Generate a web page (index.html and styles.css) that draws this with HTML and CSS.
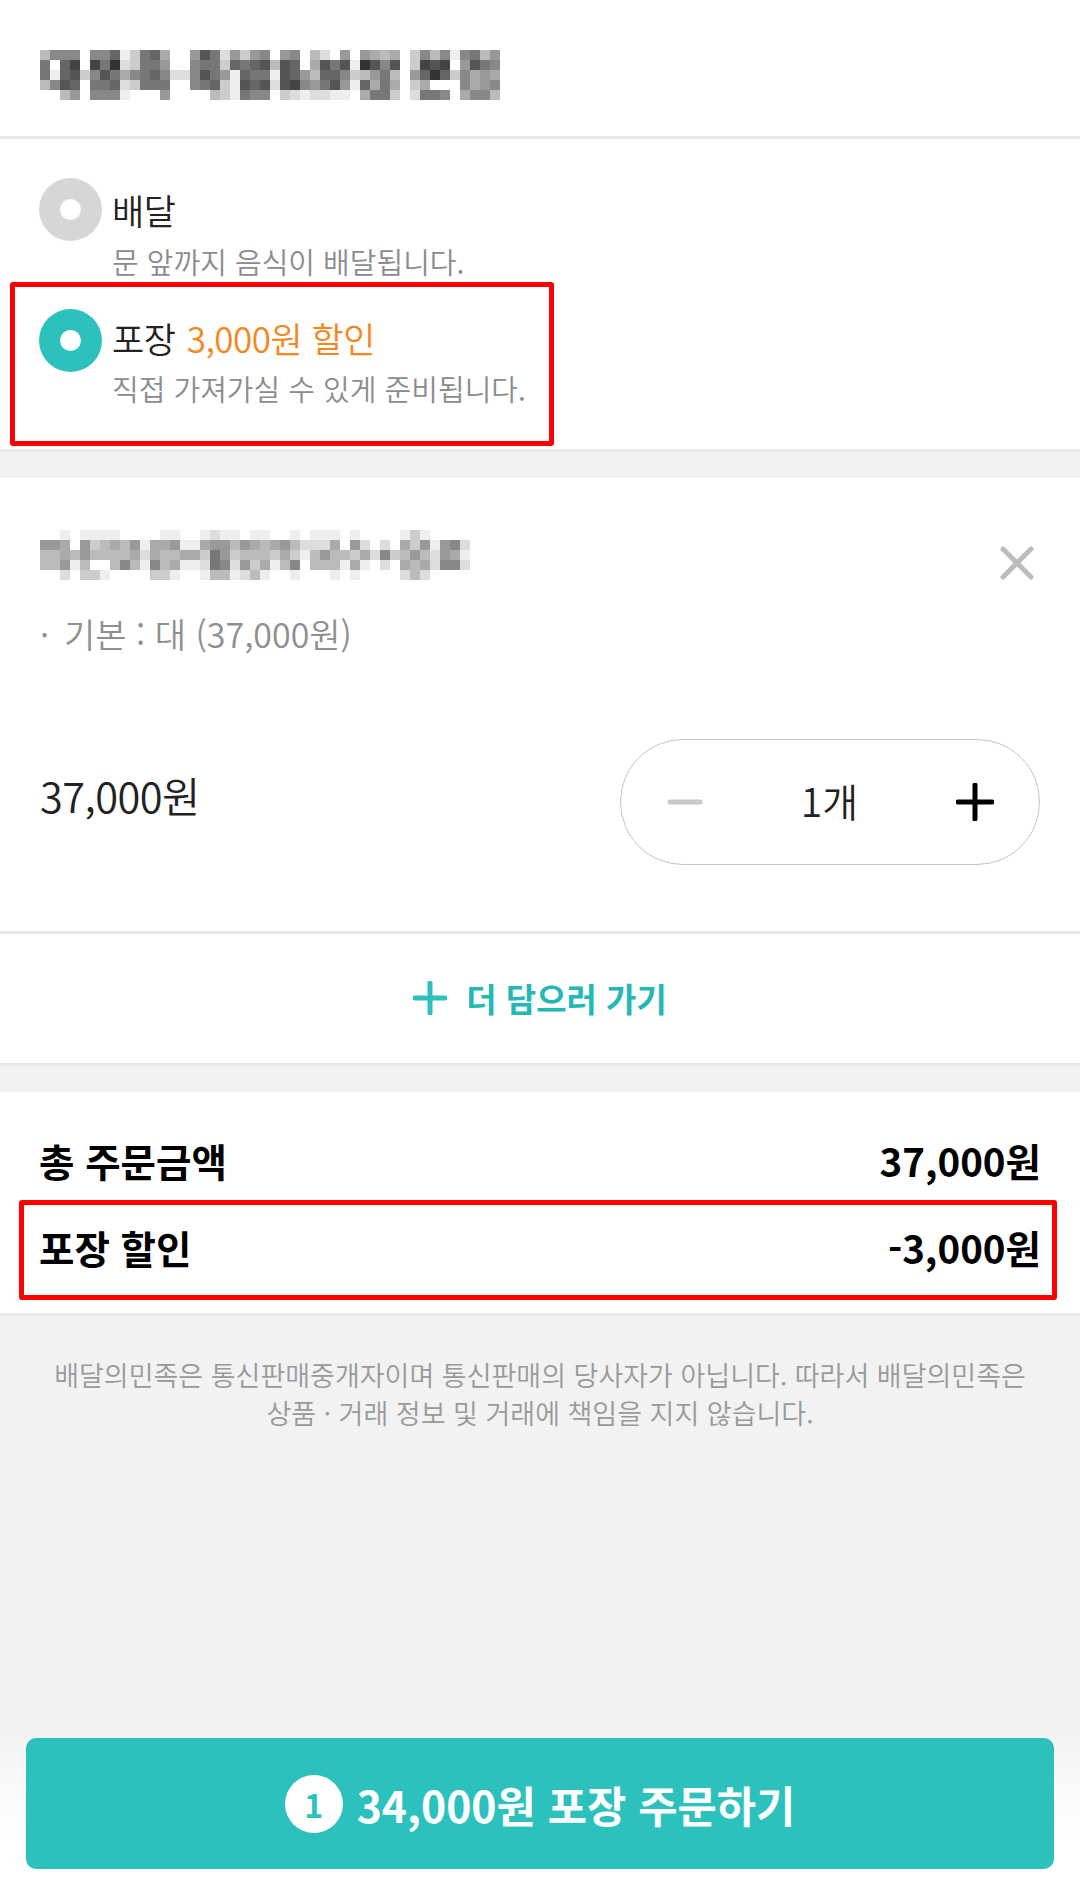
FILE: index.html
```html
<!DOCTYPE html>
<html lang="ko">
<head>
<meta charset="utf-8">
<title>카트</title>
<link rel="stylesheet" href="styles.css">
</head>
<body>
<main class="page">
  <header class="store">
    <svg class="mosaic store-name" viewBox="0 0 46 5" shape-rendering="crispEdges" aria-hidden="true">
      <g><rect x=0 fill=#bbb /><rect x=1 fill=#888 /><rect x=2 fill=#888 /><rect x=3 fill=#888 /><rect x=5 fill=#888 /><rect x=6 fill=#888 /><rect x=7 fill=#666 /><rect x=8 fill=#eee /><rect x=9 fill=#ccc /><rect x=10 fill=#777 /><rect x=11 fill=#666 /><rect x=12 fill=#aaa /><rect x=15 fill=#999 /><rect x=16 fill=#555 /><rect x=17 fill=#777 /><rect x=18 fill=#ddd /><rect x=19 fill=#999 /><rect x=20 fill=#ccc /><rect x=21 fill=#999 /><rect x=22 fill=#888 /><rect x=24 fill=#999 /><rect x=25 fill=#888 /><rect x=27 fill=#bbb /><rect x=28 fill=#ddd /><rect x=30 fill=#999 /><rect x=32 fill=#999 /><rect x=33 fill=#aaa /><rect x=34 fill=#bbb /><rect x=35 fill=#aaa /><rect x=37 fill=#ccc /><rect x=38 fill=#888 /><rect x=39 fill=#bbb /><rect x=40 fill=#888 /><rect x=41 fill=#eee /><rect x=42 fill=#888 /><rect x=43 fill=#777 /><rect x=44 fill=#bbb /><rect x=45 fill=#999 /></g>
      <g transform="translate(0 1)"><rect x=0 fill=#777 /><rect x=2 fill=#666 /><rect x=3 fill=#444 /><rect x=5 fill=#444 /><rect x=6 fill=#777 /><rect x=7 fill=#333 /><rect x=8 fill=#ddd /><rect x=9 fill=#ccc /><rect x=10 fill=#777 /><rect x=11 fill=#777 /><rect x=12 fill=#999 /><rect x=15 fill=#888 /><rect x=16 fill=#777 /><rect x=17 fill=#777 /><rect x=18 fill=#ccc /><rect x=19 fill=#666 /><rect x=20 fill=#777 /><rect x=21 fill=#666 /><rect x=22 fill=#555 /><rect x=23 fill=#bbb /><rect x=24 fill=#555 /><rect x=25 fill=#666 /><rect x=27 fill=#aaa /><rect x=28 fill=#555 /><rect x=29 fill=#777 /><rect x=30 fill=#555 /><rect x=31 fill=#eee /><rect x=32 fill=#333 /><rect x=33 fill=#555 /><rect x=34 fill=#888 /><rect x=35 fill=#555 /><rect x=37 fill=#ccc /><rect x=38 fill=#444 /><rect x=39 fill=#555 /><rect x=40 fill=#444 /><rect x=42 fill=#999 /><rect x=43 fill=#555 /><rect x=44 fill=#777 /><rect x=45 fill=#888 /></g>
      <g transform="translate(0 2)"><rect x=0 fill=#777 /><rect x=1 fill=#eee /><rect x=2 fill=#666 /><rect x=3 fill=#555 /><rect x=4 fill=#ccc /><rect x=5 fill=#888 /><rect x=6 fill=#555 /><rect x=7 fill=#777 /><rect x=8 fill=#aaa /><rect x=9 fill=#888 /><rect x=10 fill=#777 /><rect x=11 fill=#666 /><rect x=12 fill=#888 /><rect x=13 fill=#ddd /><rect x=14 fill=#ddd /><rect x=15 fill=#888 /><rect x=16 fill=#555 /><rect x=17 fill=#777 /><rect x=18 fill=#999 /><rect x=19 fill=#eee /><rect x=20 fill=#666 /><rect x=21 fill=#777 /><rect x=22 fill=#777 /><rect x=23 fill=#eee /><rect x=24 fill=#555 /><rect x=25 fill=#666 /><rect x=26 fill=#999 /><rect x=27 fill=#bbb /><rect x=28 fill=#666 /><rect x=29 fill=#666 /><rect x=30 fill=#888 /><rect x=31 fill=#ccc /><rect x=32 fill=#bbb /><rect x=33 fill=#999 /><rect x=34 fill=#777 /><rect x=35 fill=#bbb /><rect x=37 fill=#999 /><rect x=38 fill=#666 /><rect x=39 fill=#333 /><rect x=40 fill=#666 /><rect x=41 fill=#ccc /><rect x=42 fill=#888 /><rect x=43 fill=#aaa /><rect x=44 fill=#999 /><rect x=45 fill=#aaa /></g>
      <g transform="translate(0 3)"><rect x=0 fill=#bbb /><rect x=1 fill=#888 /><rect x=2 fill=#555 /><rect x=3 fill=#666 /><rect x=5 fill=#777 /><rect x=6 fill=#777 /><rect x=7 fill=#666 /><rect x=8 fill=#ddd /><rect x=9 fill=#ccc /><rect x=10 fill=#777 /><rect x=11 fill=#777 /><rect x=12 fill=#777 /><rect x=15 fill=#888 /><rect x=16 fill=#777 /><rect x=17 fill=#666 /><rect x=18 fill=#ccc /><rect x=19 fill=#eee /><rect x=20 fill=#555 /><rect x=21 fill=#666 /><rect x=22 fill=#555 /><rect x=23 fill=#ddd /><rect x=24 fill=#555 /><rect x=25 fill=#444 /><rect x=26 fill=#888 /><rect x=27 fill=#999 /><rect x=28 fill=#777 /><rect x=29 fill=#555 /><rect x=30 fill=#999 /><rect x=31 fill=#eee /><rect x=32 fill=#666 /><rect x=33 fill=#aaa /><rect x=34 fill=#777 /><rect x=35 fill=#aaa /><rect x=37 fill=#ccc /><rect x=38 fill=#aaa /><rect x=42 fill=#888 /><rect x=43 fill=#aaa /><rect x=44 fill=#999 /><rect x=45 fill=#888 /></g>
      <g transform="translate(0 4)"><rect x=2 fill=#bbb /><rect x=3 fill=#999 /><rect x=5 fill=#888 /><rect x=6 fill=#888 /><rect x=7 fill=#888 /><rect x=8 fill=#eee /><rect x=12 fill=#999 /><rect x=17 fill=#bbb /><rect x=18 fill=#ccc /><rect x=19 fill=#eee /><rect x=20 fill=#777 /><rect x=21 fill=#888 /><rect x=22 fill=#888 /><rect x=24 fill=#ccc /><rect x=25 fill=#ddd /><rect x=26 fill=#eee /><rect x=27 fill=#ddd /><rect x=28 fill=#ddd /><rect x=29 fill=#eee /><rect x=30 fill=#eee /><rect x=32 fill=#aaa /><rect x=33 fill=#777 /><rect x=34 fill=#777 /><rect x=35 fill=#ccc /><rect x=37 fill=#ddd /><rect x=38 fill=#777 /><rect x=39 fill=#777 /><rect x=40 fill=#888 /><rect x=42 fill=#aaa /><rect x=43 fill=#888 /><rect x=44 fill=#888 /><rect x=45 fill=#bbb /></g>
    </svg>
  </header>

  <section class="options">
    <div class="option">
      <span class="radio"></span>
      <div class="option-title">배달</div>
      <div class="option-desc">문 앞까지 음식이 배달됩니다.</div>
    </div>
    <div class="option option-picked">
      <span class="radio radio-on"></span>
      <div class="option-title">포장 <em class="discount">3,000원 할인</em></div>
      <div class="option-desc">직접 가져가실 수 있게 준비됩니다.</div>
      <span class="mark mark-option"></span>
    </div>
  </section>

  <section class="item">
    <div class="item-head">
      <svg class="mosaic item-name" viewBox="0 0 43 5" shape-rendering="crispEdges" aria-hidden="true">
        <g><rect x=2 fill=#eee /><rect x=4 fill=#eee /><rect x=5 fill=#eee /><rect x=6 fill=#eee /><rect x=7 fill=#eee /><rect x=12 fill=#eee /><rect x=13 fill=#eee /><rect x=16 fill=#eee /><rect x=17 fill=#ddd /><rect x=18 fill=#eee /><rect x=19 fill=#eee /><rect x=21 fill=#eee /><rect x=22 fill=#eee /><rect x=25 fill=#eee /><rect x=27 fill=#eee /><rect x=28 fill=#eee /><rect x=29 fill=#eee /><rect x=31 fill=#eee /><rect x=36 fill=#eee /><rect x=37 fill=#ccc /><rect x=38 fill=#eee /></g>
        <g transform="translate(0 1)"><rect x=0 fill=#999 /><rect x=1 fill=#999 /><rect x=2 fill=#aaa /><rect x=4 fill=#999 /><rect x=5 fill=#ccc /><rect x=6 fill=#bbb /><rect x=7 fill=#aaa /><rect x=8 fill=#bbb /><rect x=9 fill=#999 /><rect x=10 fill=#eee /><rect x=11 fill=#aaa /><rect x=12 fill=#aaa /><rect x=13 fill=#999 /><rect x=14 fill=#eee /><rect x=15 fill=#eee /><rect x=16 fill=#aaa /><rect x=17 fill=#999 /><rect x=18 fill=#999 /><rect x=19 fill=#bbb /><rect x=20 fill=#999 /><rect x=21 fill=#aaa /><rect x=22 fill=#bbb /><rect x=23 fill=#aaa /><rect x=24 fill=#999 /><rect x=25 fill=#bbb /><rect x=26 fill=#ddd /><rect x=27 fill=#ddd /><rect x=28 fill=#ddd /><rect x=29 fill=#aaa /><rect x=31 fill=#999 /><rect x=32 fill=#ddd /><rect x=34 fill=#ddd /><rect x=36 fill=#aaa /><rect x=37 fill=#ccc /><rect x=38 fill=#999 /><rect x=39 fill=#eee /><rect x=40 fill=#999 /><rect x=41 fill=#888 /><rect x=42 fill=#ddd /></g>
        <g transform="translate(0 2)"><rect x=0 fill=#bbb /><rect x=1 fill=#bbb /><rect x=2 fill=#aaa /><rect x=3 fill=#bbb /><rect x=4 fill=#999 /><rect x=5 fill=#bbb /><rect x=6 fill=#bbb /><rect x=7 fill=#bbb /><rect x=8 fill=#bbb /><rect x=9 fill=#aaa /><rect x=10 fill=#ddd /><rect x=11 fill=#aaa /><rect x=12 fill=#bbb /><rect x=13 fill=#bbb /><rect x=14 fill=#aaa /><rect x=15 fill=#aaa /><rect x=16 fill=#ccc /><rect x=17 fill=#777 /><rect x=18 fill=#999 /><rect x=19 fill=#ccc /><rect x=20 fill=#bbb /><rect x=21 fill=#bbb /><rect x=22 fill=#bbb /><rect x=23 fill=#ccc /><rect x=24 fill=#aaa /><rect x=25 fill=#ccc /><rect x=26 fill=#eee /><rect x=27 fill=#bbb /><rect x=28 fill=#999 /><rect x=29 fill=#bbb /><rect x=30 fill=#bbb /><rect x=31 fill=#ccc /><rect x=32 fill=#aaa /><rect x=33 fill=#ddd /><rect x=34 fill=#888 /><rect x=35 fill=#ccc /><rect x=36 fill=#bbb /><rect x=37 fill=#999 /><rect x=38 fill=#bbb /><rect x=39 fill=#ddd /><rect x=40 fill=#999 /><rect x=41 fill=#aaa /><rect x=42 fill=#eee /></g>
        <g transform="translate(0 3)"><rect x=0 fill=#bbb /><rect x=1 fill=#bbb /><rect x=2 fill=#999 /><rect x=3 fill=#eee /><rect x=4 fill=#bbb /><rect x=7 fill=#bbb /><rect x=8 fill=#888 /><rect x=9 fill=#bbb /><rect x=10 fill=#eee /><rect x=11 fill=#888 /><rect x=12 fill=#bbb /><rect x=13 fill=#aaa /><rect x=14 fill=#eee /><rect x=15 fill=#eee /><rect x=16 fill=#ddd /><rect x=17 fill=#777 /><rect x=18 fill=#888 /><rect x=19 fill=#ddd /><rect x=20 fill=#999 /><rect x=21 fill=#ccc /><rect x=22 fill=#aaa /><rect x=23 fill=#eee /><rect x=24 fill=#bbb /><rect x=25 fill=#888 /><rect x=27 fill=#bbb /><rect x=28 fill=#bbb /><rect x=29 fill=#bbb /><rect x=30 fill=#eee /><rect x=31 fill=#aaa /><rect x=32 fill=#eee /><rect x=34 fill=#ddd /><rect x=36 fill=#aaa /><rect x=37 fill=#bbb /><rect x=38 fill=#aaa /><rect x=39 fill=#ddd /><rect x=40 fill=#888 /><rect x=41 fill=#888 /><rect x=42 fill=#ddd /></g>
        <g transform="translate(0 4)"><rect x=2 fill=#ddd /><rect x=4 fill=#ccc /><rect x=5 fill=#ccc /><rect x=6 fill=#eee /><rect x=11 fill=#ccc /><rect x=12 fill=#ccc /><rect x=13 fill=#eee /><rect x=16 fill=#eee /><rect x=17 fill=#bbb /><rect x=18 fill=#bbb /><rect x=19 fill=#eee /><rect x=20 fill=#ddd /><rect x=21 fill=#bbb /><rect x=22 fill=#eee /><rect x=25 fill=#eee /><rect x=29 fill=#eee /><rect x=31 fill=#eee /><rect x=36 fill=#ddd /><rect x=37 fill=#bbb /><rect x=38 fill=#ddd /></g>
      </svg>
      <svg class="icon-close" viewBox="0 0 34 34" aria-label="삭제"><path d="M3 3 31 31M31 3 3 31"/></svg>
    </div>
    <div class="item-option"><span class="bullet">·</span>기본 : 대 (37,000원)</div>
    <div class="item-foot">
      <div class="item-price">37,000원</div>
      <div class="stepper">
        <svg class="icon-minus" viewBox="0 0 36 6" aria-label="빼기"><path d="M3 3H33"/></svg>
        <span class="qty">1개</span>
        <svg class="icon-plus" viewBox="0 0 38 38" aria-label="더하기"><path d="M19 2V36M2 19H36"/></svg>
      </div>
    </div>
  </section>

  <a class="more">
    <svg class="icon-more" viewBox="0 0 34 34" aria-hidden="true"><path d="M17 2V32M2 17H32"/></svg>
    <span>더 담으러 가기</span>
  </a>

  <section class="summary">
    <div class="sum-row"><span>총 주문금액</span><span>37,000원</span></div>
    <div class="sum-row sum-row-marked"><span>포장 할인</span><span>-3,000원</span><span class="mark mark-sum"></span></div>
  </section>

  <p class="notice">배달의민족은 통신판매중개자이며 통신판매의 당사자가 아닙니다. 따라서 배달의민족은<br>상품 · 거래 정보 및 거래에 책임을 지지 않습니다.</p>

  <footer class="cta-wrap">
    <button class="cta"><span class="cta-count">1</span><span>34,000원 포장 주문하기</span></button>
  </footer>
</main>
</body>
</html>
```

FILE: styles.css
```css
* { box-sizing: border-box; margin: 0; padding: 0; }
html, body { width: 1080px; height: 1895px; overflow: hidden; }
body { background: #f2f2f2; font-family: "Noto Sans CJK KR", "Noto Sans", sans-serif; color: #222; }

.page { width: 1080px; height: 1895px; display: flex; flex-direction: column; }

.mosaic { display: block; }
.mosaic rect { width: 1px; height: 1px; }

.store { height: 139px; padding: 50px 40px 0; background: #fff; border-bottom: 3px solid #e8e8e8; }
.store-name { width: 460px; height: 50px; }

.options { height: 313px; padding: 39px 39px 0; background: #fff; border-bottom: 3px solid #e8e8e8; }
.option { position: relative; display: grid; grid-template-columns: 63px 1fr; column-gap: 10px; height: 131px; align-content: start; }
.radio { grid-row: 1 / span 2; width: 63px; height: 63px; border-radius: 50%; background: #d6d6d6; display: flex; align-items: center; justify-content: center; }
.radio::after { content: ""; width: 21px; height: 21px; border-radius: 50%; background: #fff; }
.radio-on { background: #2cc1bc; }
.option-title { font-size: 35px; line-height: 63px; letter-spacing: -0.5px; font-weight: 350; color: #222; white-space: nowrap; }
.discount { font-style: normal; color: #f5871f; margin-left: 2px; }
.option-desc { font-size: 29px; line-height: 41px; font-weight: 350; color: #8c8c8c; white-space: nowrap; }
.option-picked .option-title { line-height: 58px; }
.option-picked .option-desc { line-height: 42px; }

.mark { position: absolute; border: 5px solid #ff0000; border-radius: 3px; pointer-events: none; }
.mark-option { left: -29px; top: -27px; width: 544px; height: 164px; }
.mark-sum { left: -20px; top: -3px; width: 1038px; height: 100px; }

.item { height: 456px; padding: 53px 40px 0; background: #fff; margin-top: 26px; border-bottom: 3px solid #e8e8e8; }
.item-head { display: flex; justify-content: space-between; align-items: flex-end; padding-right: 6px; margin-top: -1px; }
.item-name { width: 430px; height: 50px; }
.icon-close { width: 34px; height: 34px; fill: none; stroke: #bcbcbc; stroke-width: 5; stroke-linecap: round; }
.item-option { margin-top: 32px; font-size: 34px; line-height: 44px; font-weight: 350; color: #8f8f8f; white-space: nowrap; }
.bullet { display: inline-block; width: 24px; }
.item-foot { margin-top: 83px; display: flex; justify-content: space-between; align-items: center; }
.item-price { font-size: 41.5px; line-height: 50px; font-weight: 350; color: #222; margin-top: -14px; letter-spacing: -0.5px; }
.stepper { width: 420px; height: 126px; border: 1.5px solid #c4c4c4; border-radius: 63px; display: flex; align-items: center; justify-content: space-between; padding: 0 45px 0 46px; }
.icon-minus { width: 36px; height: 6px; fill: none; stroke: #c9c9c9; stroke-width: 5; stroke-linecap: round; }
.icon-plus { width: 38px; height: 38px; fill: none; stroke: #000; stroke-width: 5; stroke-linecap: round; }
.qty { font-size: 39px; line-height: 50px; font-weight: 350; color: #222; margin-top: -4px; }

.more { height: 132px; display: flex; align-items: center; justify-content: center; gap: 19px; background: #fff; border-bottom: 3px solid #e8e8e8; font-size: 33px; font-weight: 700; color: #22b8b3; padding: 0 0 2px 0; }
.icon-more { width: 34px; height: 34px; fill: none; stroke: #2cc1bc; stroke-width: 5; stroke-linecap: round; }

.summary { height: 224px; margin-top: 26px; padding: 25px 39px 0 39px; background: #fff; border-bottom: 3px solid #e8e8e8; display: flex; flex-direction: column; }
.sum-row { position: relative; height: 86px; display: flex; justify-content: space-between; align-items: center; font-size: 38.5px; font-weight: 700; color: #000; }
.sum-row-marked { height: 87px; }

.notice { padding-top: 40px; text-align: center; font-size: 27px; line-height: 38px; font-weight: 350; color: #999; white-space: nowrap; }

.cta-wrap { margin-top: auto; height: 195px; padding: 38px 26px 26px; background: linear-gradient(#f2f2f2 15%, #fff 70%); }
.cta { width: 100%; height: 131px; border: 0; border-radius: 10px; background: #2cc1bc; color: #fff; font-family: inherit; font-size: 42.7px; font-weight: 700; display: flex; align-items: center; justify-content: center; gap: 14px; }
.cta-count { width: 58px; height: 58px; border-radius: 50%; background: #fff; color: #2cc1bc; font-size: 32px; line-height: 58px; font-weight: 700; text-align: center; }
```
